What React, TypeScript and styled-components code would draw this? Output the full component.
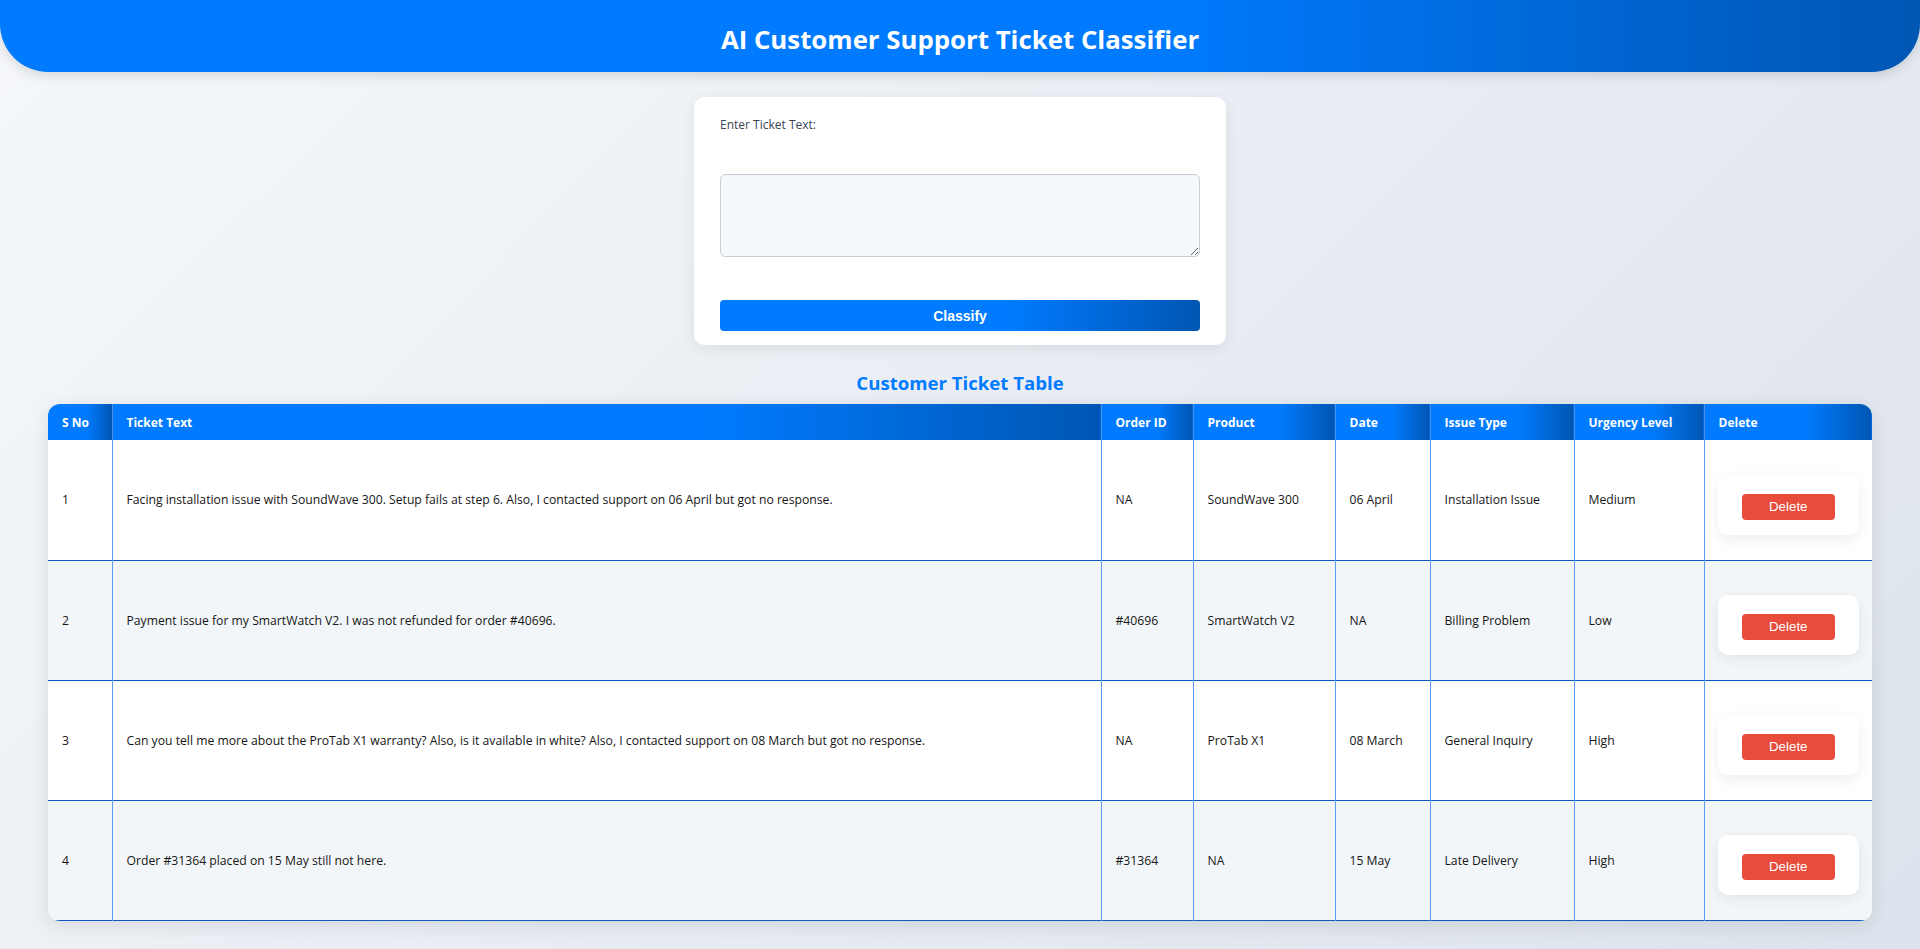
import React from "react";
import styled, { createGlobalStyle } from "styled-components";

const GlobalStyle = createGlobalStyle`
  html, body { margin: 0; padding: 0; }
  body {
    font-family: "Open Sans", "Noto Sans", sans-serif;
    color: #222;
  }
  * { box-sizing: border-box; }
`;

const Page = styled.div`
  min-height: 100vh;
  background: linear-gradient(135deg, #f5f7fa 0%, #dde3ec 100%);
  padding-bottom: 20px;
`;

const Header = styled.header`
  height: 72px;
  display: flex;
  align-items: center;
  justify-content: center;
  background: linear-gradient(90deg, #007bff 60%, #0056b3 100%);
  border-radius: 0 0 48px 48px;
  box-shadow: 0 4px 12px rgba(0, 0, 0, 0.12);
`;

const Title = styled.h1`
  margin: 0;
  padding-top: 6px;
  color: #fff;
  font-size: 25.8px;
  font-weight: 700;
`;

const FormCard = styled.section`
  width: 532px;
  margin: 25px auto 0;
  padding: 19px 26px 14px;
  background: #fff;
  border-radius: 10px;
  box-shadow: 0 4px 15px rgba(0, 0, 0, 0.07);
`;

const Label = styled.label`
  display: block;
  font-size: 12px;
  line-height: 18px;
  color: #3a4452;
  font-weight: 500;
`;

const TextArea = styled.textarea`
  display: block;
  width: 100%;
  height: 83px;
  margin-top: 40px;
  border: 1px solid #c6ced8;
  border-radius: 5px;
  background: #f5f8fb;
  resize: vertical;
  font-family: inherit;
`;

const ClassifyButton = styled.button`
  display: block;
  width: 100%;
  height: 31px;
  margin-top: 43px;
  border: none;
  border-radius: 4px;
  background: linear-gradient(90deg, #007bff 60%, #0056b3 100%);
  color: #fff;
  font-family: "Liberation Sans", Arial, sans-serif;
  font-weight: 700;
  font-size: 14px;
  cursor: pointer;
`;

const SectionTitle = styled.h2`
  margin: 25px 0 9px;
  text-align: center;
  color: #007bff;
  font-size: 18.6px;
  line-height: 25px;
  font-weight: 700;
`;

const TableWrap = styled.div`
  width: 95%;
  margin: 0 auto;
  border-radius: 12px;
  overflow: hidden;
  background: #fff;
  box-shadow: 0 4px 18px rgba(0, 0, 0, 0.1);
`;

const Table = styled.table`
  width: 100%;
  border-collapse: collapse;
  table-layout: fixed;
`;

const Col = styled.col<{ $w: number }>`
  width: ${(p) => p.$w}px;
`;

const Th = styled.th`
  height: 36px;
  padding: 0 14px;
  text-align: left;
  color: #fff;
  font-size: 12px;
  font-weight: 700;
  background: linear-gradient(90deg, #007bff 60%, #0056b3 100%);
  & + & { border-left: 1px solid #4a90e2; }
`;

const Row = styled.tr<{ $alt: boolean }>`
  height: 120px;
  background: ${(p) => (p.$alt ? "#f3f6f9" : "#fff")};
  border-bottom: 1px solid #0a5cc2;
`;

const Td = styled.td<{ $tight?: boolean }>`
  padding: 0 ${(p) => (p.$tight ? 13 : 14)}px;
  font-size: 12.2px;
  color: #161616;
  vertical-align: middle;
  & + & { border-left: 1px solid #5b9cf0; }
`;

const ActionBox = styled.div`
  margin-top: 10px;
  padding: 19px 0 15px;
  text-align: center;
  background: #fff;
  border-radius: 10px;
  box-shadow: 0 4px 14px rgba(0, 0, 0, 0.07);
`;

const DeleteButton = styled.button`
  padding: 5px 27px;
  border: none;
  border-radius: 4px;
  background: #e74c3c;
  color: #fff;
  font-family: "Liberation Sans", Arial, sans-serif;
  font-size: 13.33px;
  line-height: 16px;
  cursor: pointer;
`;

type Ticket = {
  text: string;
  orderId: string;
  product: string;
  date: string;
  issue: string;
  urgency: string;
};

const tickets: Ticket[] = [
  {
    text: "Facing installation issue with SoundWave 300. Setup fails at step 6. Also, I contacted support on 06 April but got no response.",
    orderId: "NA",
    product: "SoundWave 300",
    date: "06 April",
    issue: "Installation Issue",
    urgency: "Medium",
  },
  {
    text: "Payment issue for my SmartWatch V2. I was not refunded for order #40696.",
    orderId: "#40696",
    product: "SmartWatch V2",
    date: "NA",
    issue: "Billing Problem",
    urgency: "Low",
  },
  {
    text: "Can you tell me more about the ProTab X1 warranty? Also, is it available in white? Also, I contacted support on 08 March but got no response.",
    orderId: "NA",
    product: "ProTab X1",
    date: "08 March",
    issue: "General Inquiry",
    urgency: "High",
  },
  {
    text: "Order #31364 placed on 15 May still not here.",
    orderId: "#31364",
    product: "NA",
    date: "15 May",
    issue: "Late Delivery",
    urgency: "High",
  },
];

const columns = [
  { label: "S No", w: 64 },
  { label: "Ticket Text", w: 989 },
  { label: "Order ID", w: 92 },
  { label: "Product", w: 142 },
  { label: "Date", w: 95 },
  { label: "Issue Type", w: 144 },
  { label: "Urgency Level", w: 130 },
  { label: "Delete", w: 168 },
];

export default function App() {
  return (
    <Page>
      <GlobalStyle />
      <Header>
        <Title>AI Customer Support Ticket Classifier</Title>
      </Header>

      <FormCard>
        <Label htmlFor="ticket">Enter Ticket Text:</Label>
        <TextArea id="ticket" />
        <ClassifyButton type="button">Classify</ClassifyButton>
      </FormCard>

      <SectionTitle>Customer Ticket Table</SectionTitle>

      <TableWrap>
        <Table>
          <colgroup>
            {columns.map((c) => (
              <Col key={c.label} $w={c.w} />
            ))}
          </colgroup>
          <thead>
            <tr>
              {columns.map((c) => (
                <Th key={c.label}>{c.label}</Th>
              ))}
            </tr>
          </thead>
          <tbody>
            {tickets.map((t, i) => (
              <Row key={i} $alt={i % 2 === 1}>
                <Td>{i + 1}</Td>
                <Td>{t.text}</Td>
                <Td>{t.orderId}</Td>
                <Td>{t.product}</Td>
                <Td>{t.date}</Td>
                <Td>{t.issue}</Td>
                <Td>{t.urgency}</Td>
                <Td $tight>
                  <ActionBox>
                    <DeleteButton type="button">Delete</DeleteButton>
                  </ActionBox>
                </Td>
              </Row>
            ))}
          </tbody>
        </Table>
      </TableWrap>
    </Page>
  );
}
